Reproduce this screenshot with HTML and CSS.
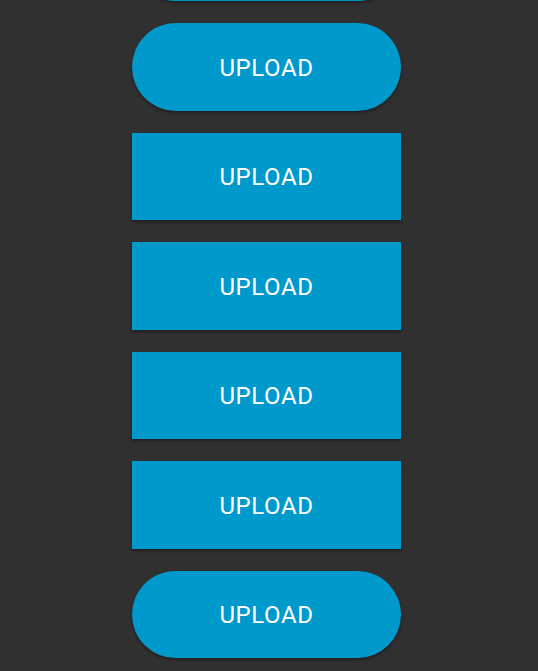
FILE: index.html
```html
<!DOCTYPE html>
<html>
<head>
<meta charset="utf-8">
<link rel="stylesheet" href="styles.css">
</head>
<body>
<div class="list">
  <div class="btn pill" aria-hidden="true"></div>
  <button class="btn pill">UPLOAD</button>
  <button class="btn">UPLOAD</button>
  <button class="btn">UPLOAD</button>
  <button class="btn">UPLOAD</button>
  <button class="btn">UPLOAD</button>
  <button class="btn pill">UPLOAD</button>
</div>
</body>
</html>
```
FILE: styles.css
```css
html, body {
  margin: 0;
  padding: 0;
  background: #303030;
  height: 100%;
  overflow: hidden;
}
.list {
  display: flex;
  flex-direction: column;
  gap: 22px;
  margin-top: -86.5px;
  padding-left: 132px;
}
.btn {
  width: 269px;
  height: 87.5px;
  border: none;
  background: #0099cc;
  color: #ffffff;
  font-family: Roboto, "Noto Sans", sans-serif;
  font-weight: 400;
  font-size: 24px;
  letter-spacing: 0.6px;
  box-shadow: 0 2px 3px rgba(0, 0, 0, 0.35);
  padding: 2px 0 0 0;
  flex: none;
  box-sizing: border-box;
}
.pill {
  border-radius: 44px;
}
```
